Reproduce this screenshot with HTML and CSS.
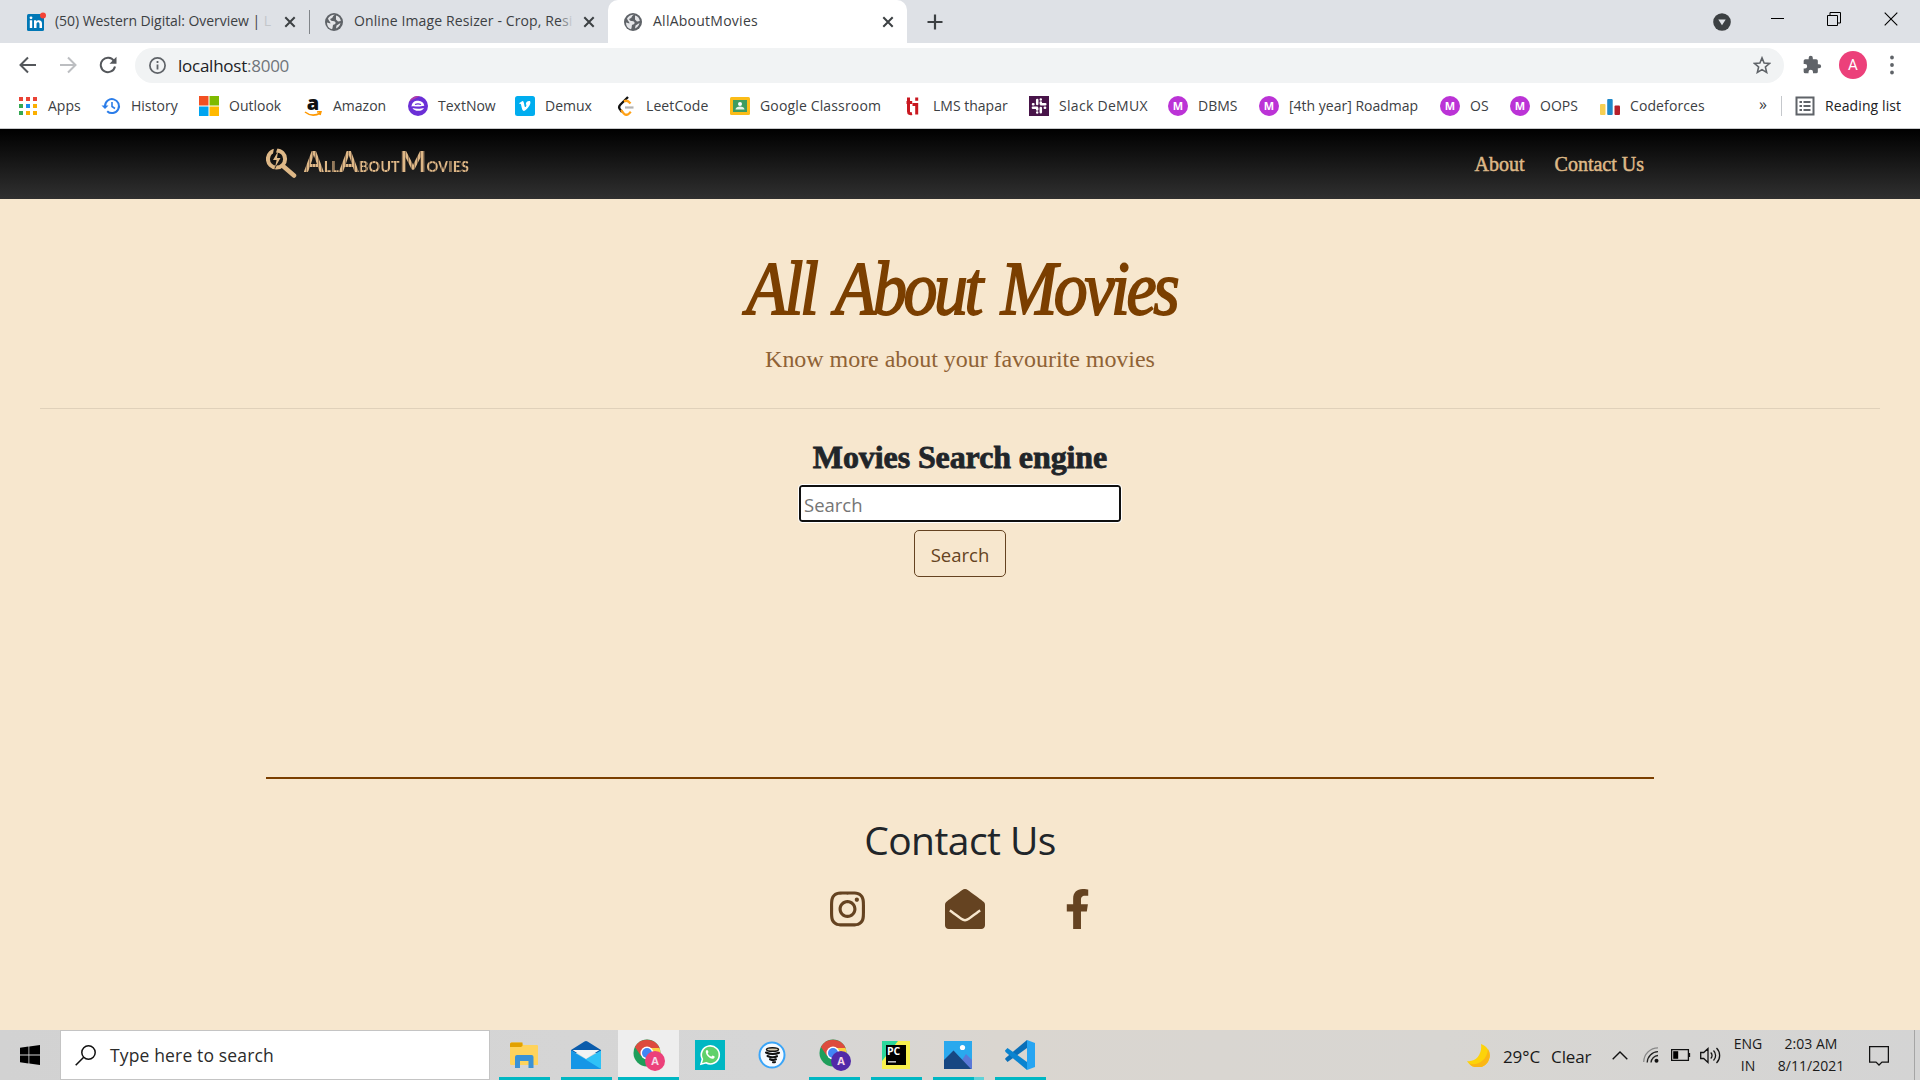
FILE: index.html
```html
<!DOCTYPE html>
<html lang="en">
<head>
<meta charset="utf-8">
<title>AllAboutMovies</title>
<link rel="stylesheet" href="styles.css">
</head>
<body>
<svg class="defs" width="0" height="0">
  <symbol id="globe" viewBox="0 0 18 18"><circle cx="9" cy="9" r="9" fill="#5f6368"/><path d="M10 1.800C7 3 8.500 5 6 5.500 4.500 6 5.500 8 8 8c3 0 3.500 3 1 3.500-2 .3-.5 2.500-2 4.700C3.500 15.500 2 12.500 2 9.500l3.500 1c0-1.500-2-3-2.500-5C4.500 3 7 1.500 10 1.800z" fill="#e4e5e8"/><path d="M11 2.500c3 .8 4.500 3 4.800 5.500l-2.800.5-2-2zM11.500 12.500l4-2.500c-.5 2.500-2 4.500-4.500 5.600z" fill="#e4e5e8"/></symbol>
  <symbol id="cross" viewBox="0 0 12 12"><path d="M1.300 1.300l9.400 9.400M10.700 1.300L1.300 10.700" stroke="#3c4043" stroke-width="2"/></symbol>
  <symbol id="chrome" viewBox="0 0 32 32"><circle cx="14" cy="14" r="13.500" fill="#1e9e5a"/><path d="M2 8A13.500 13.500 0 0 1 26.500 9H14l-6 8z" fill="#dd4b3e"/><path d="M26.500 9a13.500 13.500 0 0 1-12 18.500L20 17l-3-8z" fill="#fdd042"/><circle cx="14" cy="14" r="6.500" fill="#fff"/><circle cx="14" cy="14" r="5" fill="#4285f4"/></symbol>
</svg>

<header class="browser">
  <div class="tabs">
    <div class="tab tab-first">
      <svg width="20" height="20" viewBox="0 0 20 20"><rect x="1" y="2" width="17" height="17" rx="1.500" fill="#0077b5"/><path d="M3.800 8.300h2.400V16H3.800zM8 8.300h2.300v1.100c1.300-2 5.700-1.800 5.700 2.100V16h-2.500v-4c0-2.400-3-2.200-3 0v4H8z" fill="#fff"/><circle cx="5" cy="5.800" r="1.400" fill="#fff"/><circle cx="17" cy="3.500" r="3" fill="#f44336"/></svg>
      <span class="tab-title">(50) Western Digital: Overview | <i>L</i></span>
      <svg class="x" width="12" height="12"><use href="#cross"/></svg>
    </div>
    <div class="tab tab-second">
      <svg width="18" height="18"><use href="#globe"/></svg>
      <span class="tab-title">Online Image Resizer - Crop, Re<i class="dim">s</i><i>i</i></span>
      <svg class="x" width="12" height="12"><use href="#cross"/></svg>
    </div>
    <div class="tab tab-active">
      <svg width="18" height="18"><use href="#globe"/></svg>
      <span class="tab-title">AllAboutMovies</span>
      <svg class="x" width="12" height="12"><use href="#cross"/></svg>
    </div>
    <svg class="plus" width="16" height="16" viewBox="0 0 16 16"><path d="M8 .5v15M.5 8h15" stroke="#3c4043" stroke-width="2.200"/></svg>
    <div class="window-buttons">
      <svg width="18" height="18" viewBox="0 0 18 18"><circle cx="9" cy="9" r="8.800" fill="#3c4043"/><path d="M5.300 6.500h7.400L9 12.200z" fill="#dee1e6"/></svg>
      <svg width="13" height="13" viewBox="0 0 13 13"><path d="M0 6.500h13" stroke="#000"/></svg>
      <svg width="14" height="14" viewBox="0 0 14 14"><path d="M.5 3.500h10v10H.5zM3 3V.5h10.500V11H11" fill="none" stroke="#000"/></svg>
      <svg width="14" height="14" viewBox="0 0 14 14"><path d="M.7.7l12.600 12.600M13.300.7L.7 13.300" stroke="#000" stroke-width="1.100"/></svg>
    </div>
  </div>

  <div class="toolbar">
    <svg class="nav-icon" width="18" height="18" viewBox="0 0 18 18"><path d="M17 9H2M9 1.500L1.500 9 9 16.500" fill="none" stroke="#54575b" stroke-width="2"/></svg>
    <svg class="nav-icon" width="18" height="18" viewBox="0 0 18 18"><path d="M1 9h15M9 1.500L16.500 9 9 16.500" fill="none" stroke="#bcbec1" stroke-width="2"/></svg>
    <svg class="nav-icon" width="18" height="18" viewBox="0 0 18 18"><path d="M15 5A7.200 7.200 0 1 0 16 10.500" fill="none" stroke="#54575b" stroke-width="2"/><path d="M17.500.8v7h-7z" fill="#54575b"/></svg>
    <div class="omnibox">
      <svg width="17" height="17" viewBox="0 0 17 17"><circle cx="8.500" cy="8.500" r="7.600" fill="none" stroke="#5f6368" stroke-width="1.700"/><path d="M8.500 7.500v5M8.500 4v1.900" stroke="#5f6368" stroke-width="1.800"/></svg>
      <span class="url">localhost<i>:8000</i></span>
      <svg width="18" height="18" viewBox="0 0 24 24"><path d="M12 2.500l2.800 6.800 7.200.6-5.500 4.800 1.700 7.200-6.200-3.800-6.200 3.800 1.700-7.200L2 9.900l7.200-.6z" fill="none" stroke="#5f6368" stroke-width="2.100"/></svg>
    </div>
    <svg class="puzzle" width="20" height="20" viewBox="0 0 24 24"><path d="M20.500 11H19V7a2 2 0 0 0-2-2h-4V3.500a2.500 2.500 0 0 0-5 0V5H4a2 2 0 0 0-2 2v3.800h1.500a2.700 2.700 0 0 1 0 5.400H2V20a2 2 0 0 0 2 2h3.800v-1.500a2.700 2.700 0 0 1 5.400 0V22H17a2 2 0 0 0 2-2v-4h1.500a2.500 2.500 0 0 0 0-5z" fill="#5f6368"/></svg>
    <span class="avatar">A</span>
    <svg class="kebab" width="4" height="20" viewBox="0 0 4 20"><path d="M2 2.500h0M2 10h0M2 17.500h0" stroke="#5f6368" stroke-width="3.800" stroke-linecap="round"/></svg>
  </div>

  <nav class="bookmarks">
    <a class="bm w-apps"><svg viewBox="0 0 20 20"><path d="M1 1h4v4H1zM8 1h4v4H8zM15 1h4v4h-4z" fill="#ea4335"/><path d="M1 8h4v4H1zM1 15h4v4H1z" fill="#34a853"/><path d="M8 8h4v4H8z" fill="#1a8cf0"/><path d="M15 8h4v4h-4zM8 15h4v4H8zM15 15h4v4h-4z" fill="#fbaf00"/></svg>Apps</a>
    <a class="bm w-history"><svg viewBox="0 0 20 20"><path d="M4 10a7 7 0 1 1 2.200 5.200" fill="none" stroke="#2b7de9" stroke-width="2"/><path d="M.5 9.500h7L4 13z" fill="#2b7de9"/><path d="M11 6v4.500l3 2" fill="none" stroke="#2b7de9" stroke-width="1.600"/></svg>History</a>
    <a class="bm w-outlook"><svg viewBox="0 0 20 20"><path d="M0 0h9.500v9.500H0z" fill="#f25022"/><path d="M10.500 0H20v9.500h-9.500z" fill="#7fba00"/><path d="M0 10.500h9.500V20H0z" fill="#00a4ef"/><path d="M10.500 10.500H20V20h-9.500z" fill="#ffb900"/></svg>Outlook</a>
    <a class="bm w-amazon"><span class="amazon">a<svg viewBox="0 0 20 6"><path d="M2 1c5 4 11 3.500 15.500 1M14 1l4-.5-1 3.500" fill="none" stroke="#f90" stroke-width="1.600"/></svg></span>Amazon</a>
    <a class="bm w-textnow"><svg viewBox="0 0 20 20"><circle cx="10" cy="10" r="10" fill="#6b2fd6"/><path d="M1 6a10 10 0 0 1 11-6c-3 2-7 3-11 6z" fill="#b03caa"/><path d="M3.500 10.500c.5-5 4-6 7-5.800s5.500 2 5.800 5c-2.500 0-4 .8-6.300.8s-4.500-.6-6.500 0z" fill="#fff"/><path d="M4.500 12c1.500 3.500 9.500 4 11.500 0-3 .8-8 1-11.500 0z" fill="#fff"/><path d="M7 8.500c2-.8 4-.8 6 0" stroke="#6b2fd6" stroke-width="1.200" fill="none"/></svg>TextNow</a>
    <a class="bm w-demux"><svg viewBox="0 0 20 20"><rect width="20" height="20" rx="2.500" fill="#00adef"/><path d="M4 7.300L7.500 5c2 0 1.500 6 2.700 6 1 0 1.800-2.500.6-2.800C11 5.500 13 4.600 15 5c2 2.800-3.500 9.500-6 9.900-2.800.4-2.300-8-3.900-7z" fill="#fff"/></svg>Demux</a>
    <a class="bm w-leet"><svg viewBox="0 0 20 20"><path d="M12 1L4.500 8.500c-2 2-2 3.500 0 5.500l1.500 2" fill="none" stroke="#111" stroke-width="2.300"/><path d="M5 14l2.800 3.500c1.700 1.800 3.700 1.500 5.300 0l1.700-1.700M8 5.500c2-1.500 4-1 6.500 2" fill="none" stroke="#ffa116" stroke-width="2.300"/><path d="M9 11.500h8.500" stroke="#b3b3b3" stroke-width="2.200"/></svg>LeetCode</a>
    <a class="bm w-class"><svg viewBox="0 0 20 20"><rect y="1" width="20" height="18" rx="1.500" fill="#fbbc18"/><path d="M3 4h14v12H3z" fill="#3d9c5f"/><circle cx="10" cy="8" r="2" fill="#fff"/><path d="M5.500 13.500c0-4 9-4 9 0z" fill="#e6f4ea"/></svg>Google Classroom</a>
    <a class="bm w-lms"><svg viewBox="0 0 20 20"><path d="M5.500 1.500v14c0 2 1.500 2.500 3.500 2M3.500 6.500h5.700M13.700 7v11.500M13.700 1.500v3.200M9.500 8.500h4" fill="none" stroke="#c91820" stroke-width="3"/></svg>LMS thapar</a>
    <a class="bm w-slack"><svg viewBox="0 0 20 20"><path d="M0 0h20v20H0z" fill="#481449"/><path d="M8.200 4v4M4 8.200h.4M11.800 7.800V6.600M11.800 3.500h0M12 8.200h4.300M15.800 11.800h.3M8.200 12.200v1.200M8.200 16.500h0M3.900 11.800H8M11.800 12v4.200" stroke="#fff" stroke-width="2.500" stroke-linecap="round"/></svg>Slack DeMUX</a>
    <a class="bm w-dbms"><b class="m">M</b>DBMS</a>
    <a class="bm w-road"><b class="m">M</b>[4th year] Roadmap</a>
    <a class="bm w-os"><b class="m">M</b>OS</a>
    <a class="bm w-oops"><b class="m">M</b>OOPS</a>
    <a class="bm w-forces"><svg viewBox="0 0 20 20"><rect y="8" width="5.500" height="11" rx="1" fill="#f7cf52"/><rect x="7.200" y="3" width="5.500" height="16" rx="1" fill="#1e88c9"/><rect x="14.500" y="9.500" width="5.500" height="9.500" rx="1" fill="#b51f2a"/></svg>Codeforces</a>
    <span class="more">»</span>
    <a class="bm reading"><svg viewBox="0 0 20 20"><path d="M1.500 1.500h17v17h-17z" fill="none" stroke="#5f6368" stroke-width="2"/><path d="M4.500 6H7M4.500 10H7M4.500 14H7M8.500 6h7M8.500 10h7M8.500 14h7" stroke="#5f6368" stroke-width="1.800"/></svg>Reading list</a>
  </nav>
</header>

<main class="page">
  <div class="navbar">
    <svg class="logo-icon" width="31" height="31" viewBox="0 0 31 31"><circle cx="10.500" cy="11" r="8.600" fill="none" stroke="#deb887" stroke-width="4"/><path d="M17.500 18.500l10.500 9" stroke="#deb887" stroke-width="4.500" stroke-linecap="round"/><path d="M8 0h3.500L8.500 9H15L8.500 22l1-8H5.500z" fill="#111"/><path d="M12 3.500L7 12h3.600L9 19.500 14.500 10H11z" fill="#deb887"/></svg>
    <span class="brand">A<small>ll</small>A<small>bout</small>M<small>ovies</small></span>
    <a class="nav-link about">About</a>
    <a class="nav-link">Contact Us</a>
  </div>

  <section class="hero">
    <h1>All About Movies</h1>
    <p>Know more about your favourite movies</p>
  </section>

  <section class="search">
    <h2>Movies Search engine</h2>
    <input type="text" placeholder="Search">
    <button type="button">Search</button>
  </section>

  <footer class="contact">
    <h3>Contact Us</h3>
    <div class="social">
      <svg width="35" height="40" viewBox="0 0 448 512"><path d="M224.100 141c-63.600 0-114.900 51.300-114.900 114.900s51.300 114.900 114.900 114.900S339 319.500 339 255.900 287.700 141 224.100 141zm0 189.600c-41.100 0-74.700-33.500-74.700-74.700s33.500-74.700 74.700-74.700 74.700 33.500 74.700 74.700-33.600 74.700-74.700 74.700zm146.400-194.300c0 14.900-12 26.800-26.800 26.800-14.900 0-26.800-12-26.800-26.800s12-26.800 26.800-26.800 26.800 12 26.800 26.800zm76.100 27.200c-1.700-35.900-9.900-67.700-36.200-93.900-26.200-26.200-58-34.400-93.900-36.200-37-2.100-147.900-2.100-184.900 0-35.800 1.700-67.600 9.900-93.900 36.100s-34.400 58-36.200 93.900c-2.100 37-2.100 147.900 0 184.900 1.700 35.900 9.900 67.700 36.200 93.900s58 34.400 93.900 36.200c37 2.100 147.900 2.100 184.900 0 35.900-1.700 67.700-9.900 93.900-36.200 26.200-26.200 34.400-58 36.200-93.900 2.100-37 2.100-147.800 0-184.800zM398.800 388c-7.800 19.600-22.900 34.700-42.600 42.600-29.500 11.700-99.500 9-132.100 9s-102.700 2.600-132.100-9c-19.600-7.800-34.700-22.900-42.600-42.600-11.700-29.500-9-99.500-9-132.100s-2.600-102.700 9-132.100c7.800-19.600 22.900-34.700 42.600-42.600 29.500-11.700 99.500-9 132.100-9s102.700-2.600 132.100 9c19.600 7.800 34.700 22.900 42.600 42.600 11.700 29.500 9 99.500 9 132.100s2.700 102.700-9 132.100z"/></svg>
      <svg width="40" height="40" viewBox="0 0 512 512"><path d="M512 464c0 26.510-21.490 48-48 48H48c-26.510 0-48-21.490-48-48V200.724a48 48 0 0 1 18.387-37.776c24.913-19.529 45.501-35.365 164.200-121.511C199.412 29.170 232.797-.347 256 .003c23.198-.354 56.596 29.172 73.413 41.433 118.687 86.137 139.303 101.995 164.200 121.512A48 48 0 0 1 512 200.724V464zm-65.666-196.605c-2.563-3.728-7.700-4.595-11.339-1.907-22.845 16.873-55.462 40.705-105.582 77.079-16.825 12.266-50.210 41.781-73.413 41.430-23.211.344-56.559-29.143-73.413-41.430-50.114-36.370-82.734-60.204-105.582-77.079-3.639-2.688-8.776-1.821-11.339 1.907l-9.072 13.196a7.998 7.998 0 0 0 1.839 10.967c22.887 16.899 55.454 40.690 105.303 76.868 20.274 14.781 56.524 47.813 92.264 47.573 35.724.242 71.961-32.771 92.263-47.573 49.850-36.179 82.418-59.970 105.303-76.868a7.998 7.998 0 0 0 1.839-10.967l-9.071-13.196z"/></svg>
      <svg width="25" height="40" viewBox="0 0 320 512"><path d="M279.140 288l14.220-92.660h-88.910v-60.130c0-25.350 12.420-50.060 52.240-50.060h40.420V6.260S260.430 0 225.360 0c-73.220 0-121.080 44.380-121.080 124.720v70.620H22.890V288h81.390v224h100.170V288z"/></svg>
    </div>
  </footer>
</main>

<div class="taskbar">
  <div class="start"><svg width="20" height="20" viewBox="0 0 20 20"><path d="M0 2.800l8.500-1.200v8H0zM9.300 1.400L20 0v9.600H9.300zM0 10.400h8.500v8L0 17.200zM9.300 10.400H20V20L9.300 18.600z"/></svg></div>
  <div class="task-search">
    <svg width="21" height="21" viewBox="0 0 21 21"><circle cx="13.500" cy="7.500" r="6.700" fill="none" stroke="#111" stroke-width="1.500"/><path d="M8.700 12.300L.7 20.300" stroke="#111" stroke-width="1.600"/></svg>
    Type here to search
  </div>
  <div class="apps">
    <div class="app open"><svg width="28" height="28" viewBox="0 0 28 28"><path d="M0 3a1.500 1.500 0 0 1 1.500-1.500h10L13.500 4H27a1 1 0 0 1 1 1v19H1.500A1.500 1.500 0 0 1 0 22.500z" fill="#ffd35b"/><path d="M0 3a1.500 1.500 0 0 1 1.500-1.500h11V5L11 6H0z" fill="#e2a100"/><path d="M5 27V16a2 2 0 0 1 2-2h14.500a2 2 0 0 1 2 2v11h-5v-7H10v7z" fill="#3a92d6"/></svg></div>
    <div class="app open"><svg width="30" height="28" viewBox="0 0 30 28"><path d="M0 9L13.500.6q1.500-1 3 0L30 9v3H0z" fill="#0b5cab"/><path d="M0 9.500L15 18l15-8.500V28H0z" fill="#2fc2f7"/><path d="M0 9.500L30 28H0z" fill="#1696e6"/><path d="M1.500 9h27L15 17.800z" fill="#f3f3f3"/></svg></div>
    <div class="app open active"><svg width="32" height="32" viewBox="0 0 32 32"><use href="#chrome"/><circle cx="22" cy="22" r="10" fill="#ec407a"/><text x="22" y="26.200" class="badge-a">A</text></svg></div>
    <div class="app"><svg width="30" height="30" viewBox="0 0 30 30"><path d="M0 0h30v30H0z" fill="#00b7c3"/><path d="M6 24.200l1.400-5A9 9 0 1 1 11 22.800z" fill="#5fd16a" stroke="#fff" stroke-width="1.600"/><path d="M11 10.500c1.500-1.500 2 0 2.500 1.500l-.8 1.500c.8 1.500 2 2.500 3.500 3.200l1.300-1.300c2 .8 3 1.200 1.500 2.800-2.500 2.500-9.500-3.500-8-7.700z" fill="#fff"/></svg></div>
    <div class="app"><svg width="28" height="28" viewBox="0 0 28 28"><circle cx="14" cy="14" r="12.500" fill="#f5faff" stroke="#3aa5f8" stroke-width="2"/><ellipse cx="14.500" cy="8.500" rx="6" ry="1.800" fill="#d8caae" stroke="#111" stroke-width="1.500"/><path d="M8 11.500c3.500 2 9.500 2 13 .3M9.500 15c3 1.500 7 1.500 9.500.2M12 18.200c2.300 1 4.500.9 6 .1M15 21.200c.8.200 1.500.1 2-.1" fill="none" stroke="#111" stroke-width="2.100" stroke-linecap="round"/></svg></div>
    <div class="app open second"><svg width="32" height="32" viewBox="0 0 32 32"><use href="#chrome"/><circle cx="22" cy="22" r="10" fill="#5129a8"/><text x="22" y="26.200" class="badge-a">A</text></svg></div>
    <div class="app open"><svg width="28" height="28" viewBox="0 0 28 28"><path d="M0 0h28v28H0z" fill="#f8f04e"/><path d="M0 0h16L0 20z" fill="#2bd89c"/><path d="M4 4h20v20H4z"/><text x="5" y="14" font-size="10.500" font-weight="700" fill="#fff" class="ui-glyph">PC</text><path d="M6 20.800h8" stroke="#bbb" stroke-width="1.600"/></svg></div>
    <div class="app open two"><svg width="28" height="28" viewBox="0 0 28 28"><path d="M0 0h28v28H0z" fill="#2aa9ee"/><path d="M12 28L22 13l6 6v9z" fill="#5a79d8"/><path d="M0 19L9.500 9.500 27 28H0z" fill="#174782"/><circle cx="18.500" cy="6.500" r="2.600" fill="#fff"/></svg></div>
    <div class="app open"><svg width="30" height="30" viewBox="0 0 30 30"><path d="M0 19l2.500 3L22 8V0L.6 18z" fill="#0a6fb8"/><path d="M0 10.500L2.500 8 22 22v8L.5 12z" fill="#0a84d0"/><path d="M22 0l8 3v24l-8 3z" fill="#27a5f2"/></svg></div>
  </div>
  <div class="tray">
    <svg class="moon" width="23" height="23" viewBox="0 0 23 23"><path d="M14 0a12 12 0 1 1-14 17C9 18.500 15.500 10 14 0z" fill="#fdd30a"/><path d="M2 19.500C10 22 20 17 21 5a12 12 0 0 1-19 14.500z" fill="#fbb616"/></svg>
    <span class="weather"><span>29°C</span><span>Clear</span></span>
    <svg class="chev" width="16" height="9" viewBox="0 0 16 9"><path d="M.7 8.300L8 1l7.300 7.300" fill="none" stroke="#111" stroke-width="1.400"/></svg>
    <svg class="wifi" width="16" height="16" viewBox="0 0 16 16"><path d="M.7 15A14.300 14.300 0 0 1 15 .9" fill="none" stroke="#888" stroke-width="1.200"/><path d="M4.200 15.500A11 11 0 0 1 15 4.700M8 15.500A7.500 7.500 0 0 1 15 8.500" fill="none" stroke="#222" stroke-width="1.300"/><circle cx="13.500" cy="13.700" r="2" fill="#111"/></svg>
    <svg class="batt" width="20" height="12" viewBox="0 0 20 12"><path d="M.6.6h16.800v10.800H.6zM18.500 4v4" fill="none" stroke="#111" stroke-width="1.300"/><path d="M2.200 2.200h5v7.600h-5z"/></svg>
    <svg class="vol" width="21" height="17" viewBox="0 0 21 17"><path d="M.7 5.500h3L8 1.500v14l-4.300-4h-3zM10.700 5.500a4 4 0 0 1 0 6M13.500 3.500a7 7 0 0 1 0 10M16.500 1a10.500 10.500 0 0 1 0 15" fill="none" stroke="#111" stroke-width="1.300"/></svg>
    <span class="lang">ENG<br>IN</span>
    <span class="clock">2:03 AM<br>8/11/2021</span>
    <svg class="note" width="20" height="20" viewBox="0 0 20 20"><path d="M.6.600h18.800v15.500H13L10 19l-3-2.900H.6z" fill="none" stroke="#111" stroke-width="1.300"/></svg>
    <span class="desktop"></span>
  </div>
</div>
</body>
</html>
```
FILE: styles.css
```css
* { box-sizing: border-box; }
body {
  margin: 0;
  width: 1920px;
  height: 1080px;
  overflow: hidden;
  display: flex;
  flex-direction: column;
  font-family: "Open Sans", "Noto Sans", sans-serif;
  color: #212529;
  background: #f7e7ce;
}
svg { display: block; flex: none; }
.defs { position: absolute; }

/* browser chrome */
.browser { height: 129px; background: #fff; border-bottom: 1px solid #c8c9cb; flex: none; }
.tabs { height: 43px; background: #dee1e6; display: flex; align-items: center; }
.tab { display: flex; align-items: center; height: 43px; font-size: 14px; color: #3c4043; }
.tab-title { flex: 1; white-space: nowrap; line-height: 24px; margin-top: -1px; }
.tab-title i { font-style: normal; color: #c3c6ca; }
.tab-title .dim { color: #8d9094; }
.tab-first { width: 310px; padding: 0 14px 0 26px; background: linear-gradient(#808489, #808489) right 10px / 1px 24px no-repeat; }
.tab-first .tab-title { margin-left: 9px; letter-spacing: -.05px; }
.tab-second { width: 298px; padding: 0 13px 0 15px; }
.tab-second .tab-title { margin-left: 11px; letter-spacing: .12px; }
.tab-active { width: 299px; padding: 0 13px 0 16px; background: #fff; border-radius: 10px 10px 0 0; }
.tab-active .tab-title { margin-left: 11px; letter-spacing: .25px; }
.plus { margin-left: 20px; }
.window-buttons { margin-left: auto; display: flex; align-items: center; gap: 43px; padding: 0 22px 6px 0; }
.window-buttons svg:first-child { margin-top: 6px; margin-right: -3px; }

.toolbar { height: 44px; display: flex; align-items: center; padding-left: 19px; }
.nav-icon { margin-right: 22px; }
.omnibox { width: 1649px; height: 35px; border-radius: 18px; background: #f1f3f4; display: flex; align-items: center; padding: 0 13px 0 14px; margin-left: -4px; }
.url { flex: 1; margin-left: 12px; font-size: 17px; letter-spacing: -.25px; color: #202124; }
.url i { font-style: normal; color: #70757a; }
.puzzle { margin-left: 18px; }
.avatar { width: 28px; height: 28px; margin-left: 17px; border-radius: 50%; background: #ec407a; color: #fff; font: 15px/28px Roboto, sans-serif; text-align: center; }
.kebab { margin-left: 23px; }

.bookmarks { display: flex; align-items: center; height: 37px; padding-left: 18px; font-size: 14px; color: #3c4043; }
.bm { display: flex; align-items: center; white-space: nowrap; flex: none; gap: 10px; }
.bm svg { width: 20px; height: 20px; }
.bm .m { width: 20px; height: 20px; border-radius: 50%; background: #bb33d6; color: #fff; font: 700 11px/20px "Open Sans", sans-serif; text-align: center; }
.bm .amazon { width: 20px; height: 20px; color: #111; font: 800 20px/13px "Open Sans", sans-serif; text-align: center; }
.bm .amazon svg { width: 20px; height: 6px; margin-top: 2px; }
.w-apps { width: 83px; }
.w-history { width: 98px; }
.w-outlook { width: 104px; }
.w-amazon { width: 105px; }
.w-textnow { width: 107px; }
.w-demux { width: 101px; }
.w-leet { width: 114px; letter-spacing: .1px; }
.w-class { width: 173px; letter-spacing: .15px; }
.w-lms { width: 126px; }
.w-slack { width: 139px; letter-spacing: .3px; }
.w-dbms { width: 91px; }
.w-road { width: 181px; }
.w-os { width: 70px; }
.w-oops { width: 90px; }
.w-forces { width: 159px; letter-spacing: .1px; }
.more { width: 22px; font-size: 16px; line-height: 20px; margin-top: -3px; }
.reading { height: 20px; border-left: 1px solid #c5c8cc; padding-left: 13px; letter-spacing: .1px; color: #202124; }

/* site */
.page { height: 901px; flex: none; }
.navbar { height: 70px; display: flex; align-items: center; padding: 0 276px 0 266px; background: linear-gradient(#000, #303030); }
.logo-icon { margin-top: -2px; }
.brand {
  margin-left: 7px; margin-top: 0; flex: 1;
  font: 900 28px/36px Lato, sans-serif;
  letter-spacing: .05px;
  color: transparent;
  background: repeating-linear-gradient(90deg, #deb887 0 2px, #94775a 2px 3px);
  -webkit-background-clip: text;
  background-clip: text;
}
.brand small { font-size: 14.500px; text-transform: uppercase; }
.nav-link { font: 20px/30px "Liberation Serif", serif; color: #deb887; -webkit-text-stroke: .5px #deb887; }
.about { margin-right: 30px; }

.hero { margin: 0 40px; height: 210px; padding-top: 47px; text-align: center; border-bottom: 1px solid #e0d1ba; }
.hero h1 { margin: 0; padding-left: 3px; font: italic 400 76px/84px "Liberation Serif", serif; letter-spacing: -3.800px; word-spacing: 8px; color: #7b3f00; -webkit-text-stroke: 1.800px #7b3f00; transform: scaleX(.893); }
.hero p { margin: 12px 0 0; font: 24px/34px "Liberation Serif", serif; letter-spacing: -.04px; color: #8f6235; }

.search { height: 370px; margin: 0 266px; padding-top: 29px; display: flex; flex-direction: column; align-items: center; border-bottom: 2px solid #7b3f00; }
.search h2 { margin: 0; font: 700 32px/38px "Liberation Serif", serif; letter-spacing: -.1px; -webkit-text-stroke: .8px #212529; white-space: nowrap; }
.search input { width: 322px; height: 37px; margin-top: 9px; padding: 1px 3px 0; border: 2px solid #101010; border-radius: 3px; outline: 1px solid #fff; background: #fff; font: 18.500px "Open Sans", sans-serif; }
.search input::placeholder { color: #757575; opacity: 1; }
.search button { width: 92px; height: 47px; margin-top: 8px; padding: 1px 0 0; border: 1px solid #654321; border-radius: 5px; background: transparent; color: #654321; font: 18.500px "Open Sans", sans-serif; }

.contact { padding-top: 35px; text-align: center; }
.contact h3 { margin: 0; font-size: 39px; font-weight: 400; line-height: 52px; letter-spacing: -.55px; }
.social { display: flex; justify-content: center; gap: 80px; margin-top: 23px; fill: #654321; }

/* taskbar */
.taskbar { height: 50px; flex: none; display: flex; background: linear-gradient(90deg, #d2d2d2, #d6d6d6 40%, #dad6d0 52%, #d8d6d2 75%, #d4d4d4); }
.start { width: 60px; display: grid; place-items: center; }
.task-search { width: 430px; border: 1px solid #c4c4c4; background: #fff; display: flex; align-items: center; gap: 14px; padding-left: 14px; font-size: 17.500px; letter-spacing: .15px; color: #2b2b2b; }
.apps { display: flex; margin-left: 3px; }
.app { width: 62px; display: flex; justify-content: center; align-items: center; }
.app.open { background: linear-gradient(#00b7c3, #00b7c3) center bottom / 51px 3px no-repeat; }
.app.active { background: linear-gradient(#00b7c3, #00b7c3) right bottom / 61px 3px no-repeat, linear-gradient(#eee, #eee) right / 61px 50px no-repeat; padding-left: 2px; }
.app.second { padding-left: 2px; }
.app.two { background: linear-gradient(90deg, #00b7c3 41px, #5fd2d8 41px) center bottom / 51px 3px no-repeat; }
.badge-a { font: 700 11px "Open Sans", sans-serif; fill: #f5d7e6; text-anchor: middle; }
.ui-glyph { font-family: "Open Sans", sans-serif; }
.tray { margin-left: auto; display: flex; align-items: center; color: #1a1a1a; }
.weather { display: flex; gap: 11px; font-size: 17px; letter-spacing: -.1px; width: 109px; margin-left: 13px; padding-top: 3px; }
.wifi { margin-left: 15px; }
.batt { margin-left: 12px; }
.vol { margin-left: 9px; }
.lang, .clock { font-size: 14px; line-height: 22px; text-align: center; white-space: nowrap; }
.lang { width: 30px; margin-left: 12px; }
.clock { width: 70px; margin-left: 13px; }
.note { margin-left: 23px; margin-top: 2px; }
.desktop { width: 6px; height: 50px; margin-left: 25px; border-left: 1px solid #a5a5a5; }
```
